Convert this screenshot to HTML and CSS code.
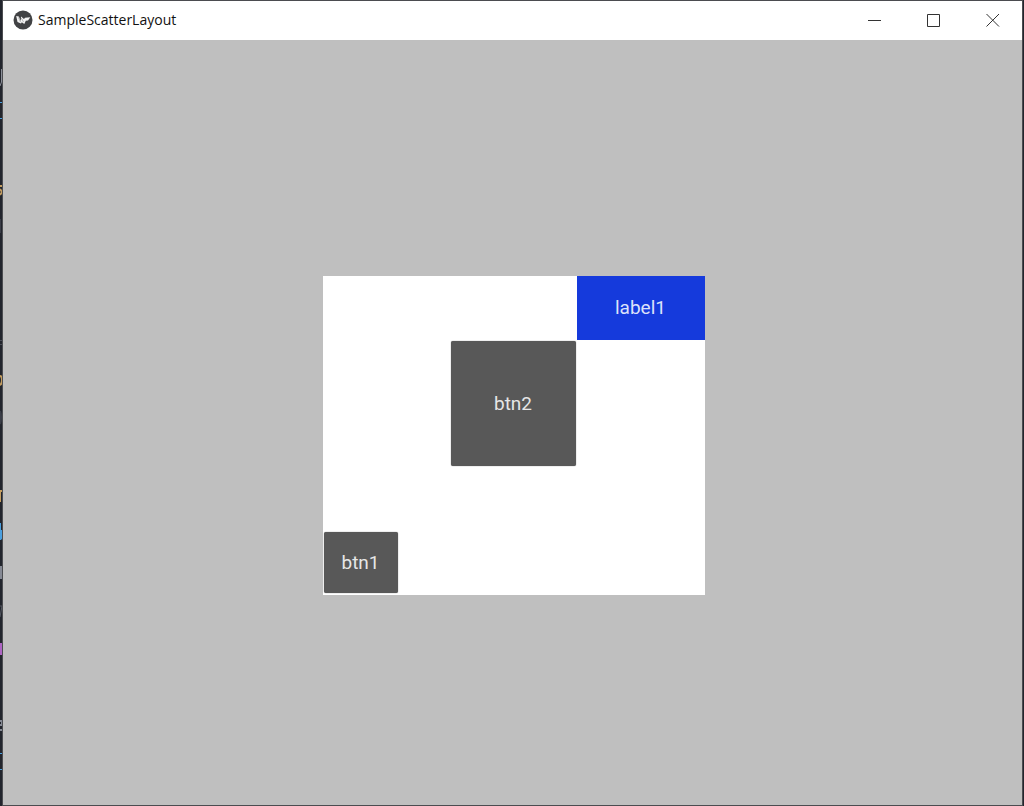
FILE: index.html
```
<!DOCTYPE html>
<html lang="en">
<head>
<meta charset="utf-8">
<title>SampleScatterLayout</title>
<link rel="stylesheet" href="styles.css">
</head>
<body>
<div class="desktop">
  <svg class="editor-edge" viewBox="0 0 3 806" preserveAspectRatio="xMinYMin slice" aria-hidden="true">
    <path d="M0 86L1.500 82V69" stroke="#8a8e98" fill="none"/>
    <path d="M0 102.500H2.500M0 118.500H2.500M0 753.500H2.500M0 769.500H2.500" stroke="#4a9fdf"/>
    <path d="M2.500 186H0M0 189L2 192L0 195" stroke="#c39d60" stroke-width="2" fill="none"/>
    <path d="M0 219V233" stroke="#3b3e48" stroke-width="2"/>
    <path d="M0 340.500H2M0 344.500H2" stroke="#4b4e58"/>
    <path d="M0 376Q2 376 2 380T0 385" stroke="#c39d60" stroke-width="2" fill="none"/>
    <path d="M0 411Q2 417 0 424" stroke="#3b3e48" stroke-width="2" fill="none"/>
    <path d="M0 502V491H2.500" stroke="#c39d60" stroke-width="2" fill="none"/>
    <path d="M0 523H1V530H2.500V538L1 540H0Z" fill="#4a9fdf"/>
    <path d="M0 566H2V579H0Z" fill="#858994"/>
    <path d="M0 606H2L0 617" stroke="#555963" fill="none"/>
    <path d="M0 643H2V655H0Z" fill="#ae65c4"/>
    <path d="M0 721H2V725H0M0 730H2" stroke="#858994" stroke-width="2" fill="none"/>
  </svg>
  <main class="window">
    <header class="titlebar">
      <svg class="logo" viewBox="0 0 20 20" aria-hidden="true">
        <circle cx="10" cy="10" r="9.500" fill="#414244"/>
        <path d="M3.200 6L5.800 6.500L7.800 11L8 6.500L11 9L12 7.800L17.300 7.300L15 10.500L12.800 10.800L11.300 14L8.800 12.300L8 13.600L4.500 12Z" fill="#f4f4f4"/>
        <path d="M5.500 7.500L7.500 12M8.300 8L10.500 12" stroke="#777" stroke-width=".5"/>
      </svg>
      <h1 class="title">SampleScatterLayout</h1>
      <div class="controls">
        <button class="control" type="button" aria-label="Minimize"><svg viewBox="0 0 14 14"><path d="M0 7.500H13"/></svg></button>
        <button class="control" type="button" aria-label="Maximize"><svg viewBox="0 0 14 14"><path d="M.5 1.500H12.500V13.500H.5Z"/></svg></button>
        <button class="control" type="button" aria-label="Close"><svg viewBox="0 0 14 14"><path d="M.5 1L13 13.500M13 1L.5 13.500"/></svg></button>
      </div>
    </header>
    <section class="workspace">
      <div class="scatter">
        <div class="label">label1</div>
        <button class="btn btn-center" type="button">btn2</button>
        <button class="btn btn-corner" type="button">btn1</button>
      </div>
    </section>
  </main>
</div>
</body>
</html>
```
FILE: styles.css
```
* {
  box-sizing: border-box;
}

body {
  margin: 0;
  background: #22252d;
}

.desktop {
  display: grid;
  grid-template-columns: 3px 1fr;
  min-height: 100vh;
  padding: 1px 2px 1px 0;
  background: #22252d;
}

.editor-edge {
  width: 3px;
  height: 806px;
  margin: -1px 0;
}

.window {
  display: flex;
  flex-direction: column;
  box-shadow: 0 0 0 1px #4b4c50;
}

.titlebar {
  display: flex;
  align-items: center;
  height: 39px;
  padding: 0 0 1px 10px;
  background: #fff;
}

.logo {
  width: 20px;
  height: 20px;
}

.title {
  margin: 0 0 0 5px;
  color: #111;
  font: 400 14px/20px "Open Sans", "Noto Sans", sans-serif;
}

.controls {
  display: flex;
  align-self: stretch;
  margin-left: auto;
}

.control {
  display: grid;
  place-items: center;
  width: 59px;
  padding: 0;
  border: 0;
  background: none;
}

.control svg {
  width: 14px;
  height: 14px;
  fill: none;
  stroke: #333;
  stroke-width: 1;
}

.workspace {
  display: grid;
  flex: 1;
  place-items: center;
  padding: 26px 0 0 2px;
  background: #bfbfbf;
}

.scatter {
  display: grid;
  grid-template-columns: 127px 127px 128px;
  grid-template-rows: 64px 127px 128px;
  background: #fff;
  font: 400 19px/24px Roboto, sans-serif;
}

.label {
  display: grid;
  grid-area: 1 / 3;
  place-items: center;
  background: #153adc;
  color: #dce2fa;
}

.btn {
  margin: 1px;
  padding: 0;
  border: 0;
  border-radius: 2px;
  background: #585858;
  box-shadow: 0 0 1px #585858;
  color: #e6e6e6;
  font: inherit;
}

.btn-center {
  grid-area: 2 / 2;
}

.btn-corner {
  grid-area: 3 / 1;
  place-self: end start;
  width: 74px;
  height: 61px;
  margin-bottom: 2px;
}
```
